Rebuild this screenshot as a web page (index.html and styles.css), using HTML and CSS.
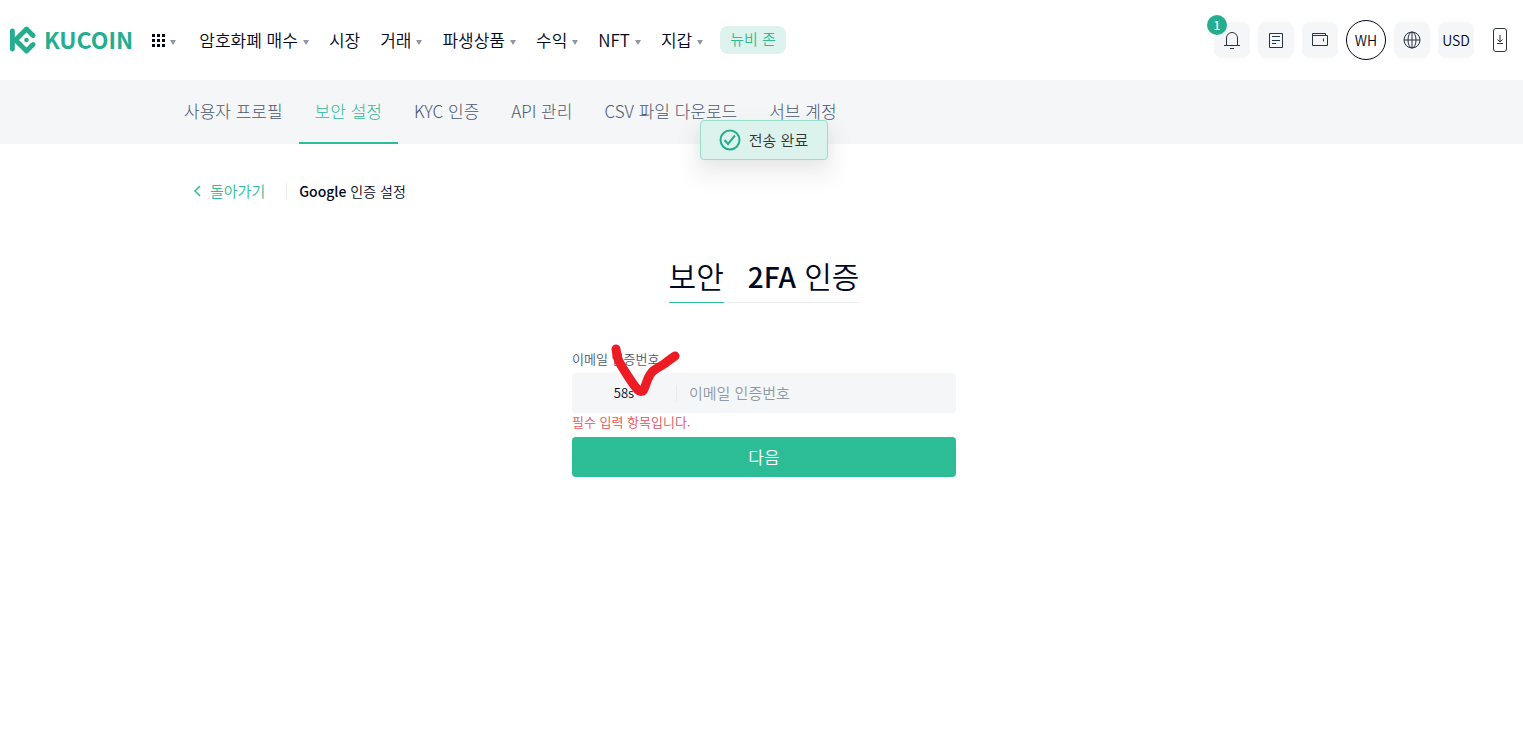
FILE: index.html
```html
<!DOCTYPE html>
<html lang="ko">

<head>
    <meta charset="UTF-8">
    <title>Google 인증 설정</title>
    <link rel="stylesheet" href="styles.css">
</head>

<body>
    <header class="header">
        <a class="logo" href="#">
            <svg width="26" height="28" viewBox="0 0 26 28">
                <path d="M2.400 5v18M2.500 14h4M23 9.500L16.500 3L5.500 14L16.500 25L23 18.500" fill="none" stroke="#24ae8f" stroke-width="4.900" stroke-linecap="round" stroke-linejoin="round"/>
                <circle cx="16.500" cy="14" r="2.300" fill="#24ae8f"/>
            </svg>
            <span>KUCOIN</span>
        </a>
        <nav class="nav">
            <a class="arrow apps" href="#" aria-label="전체">
                <svg width="13" height="13" viewBox="0 0 13 13" fill="#01081e">
                    <path d="M0 0h3v3h-3zM5 0h3v3h-3zM10 0h3v3h-3zM0 5h3v3h-3zM5 5h3v3h-3zM10 5h3v3h-3zM0 10h3v3h-3zM5 10h3v3h-3zM10 10h3v3h-3z"/>
                </svg>
            </a>
            <a class="arrow" href="#">암호화폐 매수</a>
            <a href="#">시장</a>
            <a class="arrow" href="#">거래</a>
            <a class="arrow" href="#">파생상품</a>
            <a class="arrow" href="#">수익</a>
            <a class="arrow" href="#">NFT</a>
            <a class="arrow" href="#">지갑</a>
            <a class="newbie" href="#">뉴비 존</a>
        </nav>
        <div class="tools">
            <button class="tool" aria-label="알림">
                <svg width="18" height="18" viewBox="0 0 18 18">
                    <path d="M3.500 14V7a5.500 5.500 0 0 1 11 0v7M1 14.500h16M7 17.500h4"/>
                </svg>
                <span class="badge">1</span>
            </button>
            <button class="tool" aria-label="주문">
                <svg width="18" height="18" viewBox="0 0 18 18">
                    <path d="M2.500 2.500h13v14h-13zM5 5.500h8M5 9.500h8M5 12.500h4"/>
                </svg>
            </button>
            <button class="tool" aria-label="자산">
                <svg width="18" height="18" viewBox="0 0 18 18">
                    <path d="M14.500 5V2.500h-13v12h15v-10h-15M12.500 7.500v3"/>
                </svg>
            </button>
            <button class="tool user">WH</button>
            <button class="tool" aria-label="언어">
                <svg width="18" height="18" viewBox="0 0 18 18">
                    <circle cx="9" cy="9" r="8"/>
                    <ellipse cx="9" cy="9" rx="4" ry="8"/>
                    <path d="M1 9h16M9 1v16"/>
                </svg>
            </button>
            <button class="tool">USD</button>
            <button class="tool app" aria-label="앱 다운로드">
                <svg width="14" height="24" viewBox="0 0 14 24">
                    <rect x=".5" y=".5" width="13" height="23" rx="2.500"/>
                    <path d="M7 7v7M4.500 11.500L7 14l2.500-2.500M4 15.500h6"/>
                </svg>
            </button>
        </div>
    </header>

    <div class="subnav">
        <nav class="wrap tabs">
            <a href="#">사용자 프로필</a>
            <a class="active" href="#">보안 설정</a>
            <a href="#">KYC 인증</a>
            <a href="#">API 관리</a>
            <a href="#">CSV 파일 다운로드</a>
            <a href="#">서브 계정</a>
        </nav>
        <div class="toast" role="status">
            <svg width="22" height="22" viewBox="0 0 22 22">
                <circle cx="11" cy="11" r="9.500"/>
                <path d="M5.500 11l3.500 4 7-8.500"/>
            </svg>
            <span>전송 완료</span>
        </div>
    </div>

    <main class="main">
        <div class="wrap crumbs">
            <a class="back" href="#">
                <svg width="8" height="12" viewBox="0 0 8 12"><path d="M7 1L2 6l5 5"/></svg>
                돌아가기
            </a>
            <span class="current"><b>Google</b> 인증 설정</span>
        </div>

        <div class="title">
            <a class="on" href="#">보안</a>
            <a href="#"><b>2FA</b> 인증</a>
        </div>

        <form class="form">
            <label for="code">이메일 인증번호</label>
            <div class="field">
                <button type="button" class="send">58s</button>
                <input type="text" id="code" placeholder="이메일 인증번호">
                <svg class="mark" width="70" height="54" viewBox="0 0 70 54">
                    <path d="M6 5C7 15 9 18 14 26C19 34 24 42 28 46C30 48 33 48 34 45C37 39 37 33 43 27C50 22 54 21 58 17L65 12"/>
                </svg>
            </div>
            <p class="error">필수 입력 항목입니다.</p>
            <button type="button" class="next">다음</button>
        </form>
    </main>
</body>

</html>
```
FILE: styles.css
```css
* {
    box-sizing: border-box;
}

body {
    margin: 0;
    background: #fff;
    color: #01081e;
    font-family: "Noto Sans CJK KR", sans-serif;
    font-weight: 350;
}

a {
    color: inherit;
    text-decoration: none;
    white-space: nowrap;
}

b {
    font-weight: 500;
}

button,
input {
    font: inherit;
    color: inherit;
    border: 0;
    padding: 0;
    background: none;
}

svg {
    display: block;
    flex: none;
}

/* 상단 */
.header {
    display: flex;
    align-items: center;
    height: 80px;
    padding: 0 5px 0 10px;
}

.logo {
    display: flex;
    align-items: center;
    gap: 8px;
    color: #24ae8f;
    font-size: 23px;
    line-height: 28px;
    font-weight: 700;
}

.logo span {
    padding-bottom: 2px;
}

.nav {
    display: flex;
    align-items: center;
    gap: 20px;
    margin-left: 19px;
    font-size: 17px;
    line-height: 24px;
}

.nav .arrow {
    display: flex;
    align-items: center;
    gap: 5px;
}

.nav .arrow:after {
    content: "";
    margin-top: 4px;
    border: 3px solid transparent;
    border-top: 5px solid #8c98a4;
    border-bottom: 0;
}

.nav .apps {
    margin-right: 3px;
}

.nav .newbie {
    height: 28px;
    line-height: 26px;
    margin-left: -3px;
    padding: 0 10px;
    border-radius: 8px;
    background: #def3ee;
    color: #2dbd96;
    font-size: 15px;
}

.tools {
    display: flex;
    align-items: center;
    gap: 8px;
    margin-left: auto;
}

.tool {
    position: relative;
    display: flex;
    align-items: center;
    justify-content: center;
    width: 36px;
    height: 36px;
    border-radius: 8px;
    background: #f4f6f8;
    font-size: 14px;
    line-height: 20px;
}

.tool svg {
    fill: none;
    stroke: #2b3445;
}

.tool.user {
    width: 40px;
    height: 40px;
    border: 1px solid #01081e;
    border-radius: 50%;
    background: #fff;
}

.tool.app {
    background: none;
}

.badge {
    position: absolute;
    top: -7px;
    left: -7px;
    width: 20px;
    height: 20px;
    line-height: 20px;
    border-radius: 50%;
    background: #24ae8f;
    color: #fff;
    font-size: 12px;
    font-weight: 500;
}

/* 탭 */
.subnav {
    position: relative;
    padding-left: 5px;
    background: #f4f6f8;
}

.wrap {
    display: flex;
    max-width: 1192px;
    margin: 0 auto;
}

.tabs a {
    height: 64px;
    line-height: 62px;
    padding: 0 16px;
    color: #4b5870;
    font-size: 17px;
    font-weight: 300;
}

.tabs .active {
    color: #2dbd96;
    border-bottom: 2px solid #2dbd96;
}

.toast {
    position: absolute;
    top: 40px;
    left: 50%;
    display: flex;
    align-items: center;
    justify-content: center;
    gap: 8px;
    width: 128px;
    height: 40px;
    margin-left: -62px;
    border: 1px solid #96dfcb;
    border-radius: 4px;
    background: #dcf2ec;
    box-shadow: 0 6px 14px -4px rgba(60, 40, 20, .08), 0 12px 20px 8px rgba(0, 20, 42, .05);
    color: #333;
    font-size: 15px;
    line-height: 22px;
}

.toast svg {
    fill: none;
    stroke: #24ae8f;
    stroke-width: 2;
}

/* 본문 */
.main {
    padding-left: 5px;
}

.crumbs {
    align-items: center;
    padding: 35px 25px 0;
    font-size: 15px;
    line-height: 24px;
}

.back {
    display: flex;
    align-items: center;
    gap: 9px;
    color: #2dbd96;
}

.back svg {
    fill: none;
    stroke: #2dbd96;
    stroke-width: 1.5;
}

.current {
    margin-left: 21px;
    padding-left: 13px;
    background: linear-gradient(#e8eaed, #e8eaed) left / 1px 16px no-repeat;
    font-size: 14px;
}

.title {
    display: flex;
    width: fit-content;
    margin: 48px auto 0;
    border-bottom: 1px solid #eceef0;
    font-size: 30px;
    line-height: 48px;
}

.title a {
    margin-bottom: -1px;
    margin-left: 24px;
    padding-bottom: 3px;
}

.title b {
    font-size: 28px;
}

.title .on {
    margin-left: 0;
    border-bottom: 1px solid #2dbd96;
}

.form {
    width: 384px;
    margin: 47px auto 0;
}

.form label {
    display: block;
    color: #4b5870;
    font-size: 13px;
    line-height: 18px;
}

.field {
    position: relative;
    display: flex;
    align-items: center;
    height: 40px;
    margin-top: 5px;
    border-radius: 4px;
    background: #f4f6f8;
}

.send {
    width: 105px;
    height: 16px;
    line-height: 16px;
    border-right: 1px solid #e8eaed;
    font-size: 13px;
}

.field input {
    flex: 1;
    min-width: 0;
    height: 40px;
    padding: 0 12px 2px;
    outline: none;
    font-size: 15px;
}

.field input::placeholder {
    color: #8c98a4;
    opacity: 1;
}

.mark {
    position: absolute;
    top: -29px;
    left: 38px;
    fill: none;
    stroke: #ed1c24;
    stroke-width: 9;
    stroke-linecap: round;
    stroke-linejoin: round;
    pointer-events: none;
}

.error {
    margin: 0;
    color: #e8505a;
    font-size: 13px;
    line-height: 18px;
}

.next {
    width: 100%;
    height: 40px;
    margin-top: 6px;
    padding-bottom: 2px;
    border-radius: 4px;
    background: #2dbd96;
    color: #fff;
    font-size: 17px;
}
```
